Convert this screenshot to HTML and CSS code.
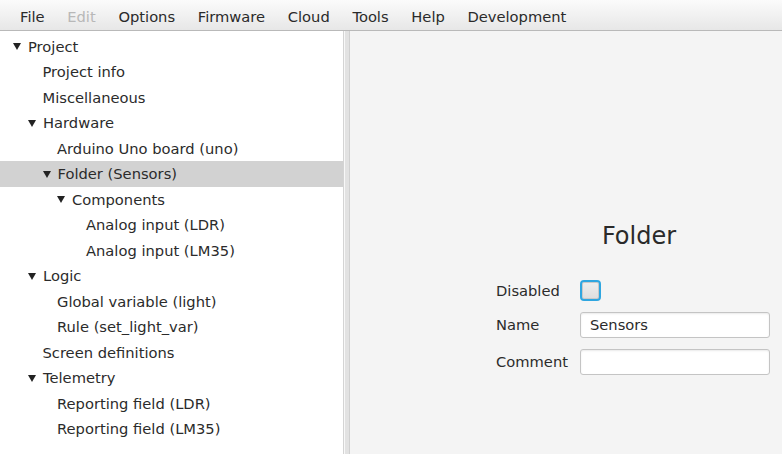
FILE: index.html
```html
<!DOCTYPE html>
<html>
<head>
<meta charset="utf-8">
<link rel="stylesheet" href="styles.css">
</head>
<body>
<div class="menubar">
  <span class="menu">File</span>
  <span class="menu disabled">Edit</span>
  <span class="menu">Options</span>
  <span class="menu">Firmware</span>
  <span class="menu">Cloud</span>
  <span class="menu">Tools</span>
  <span class="menu">Help</span>
  <span class="menu">Development</span>
</div>
<div class="main">
  <div class="tree">
    <div class="row l0"><span class="arrow"></span>Project</div>
    <div class="row l1">Project info</div>
    <div class="row l1">Miscellaneous</div>
    <div class="row l1"><span class="arrow"></span>Hardware</div>
    <div class="row l2">Arduino Uno board (uno)</div>
    <div class="row l2 selected"><span class="arrow"></span>Folder (Sensors)</div>
    <div class="row l3"><span class="arrow"></span>Components</div>
    <div class="row l4">Analog input (LDR)</div>
    <div class="row l4">Analog input (LM35)</div>
    <div class="row l1"><span class="arrow"></span>Logic</div>
    <div class="row l2">Global variable (light)</div>
    <div class="row l2">Rule (set_light_var)</div>
    <div class="row l1">Screen definitions</div>
    <div class="row l1"><span class="arrow"></span>Telemetry</div>
    <div class="row l2">Reporting field (LDR)</div>
    <div class="row l2">Reporting field (LM35)</div>
  </div>
  <div class="divider"></div>
  <div class="detail">
    <div class="form">
      <div class="title">Folder</div>
      <div class="field">
        <span class="label">Disabled</span>
        <span class="checkbox"></span>
      </div>
      <div class="field">
        <span class="label">Name</span>
        <span class="input">Sensors</span>
      </div>
      <div class="field">
        <span class="label">Comment</span>
        <span class="input"></span>
      </div>
    </div>
  </div>
</div>
</body>
</html>
```
FILE: styles.css
```css
* { box-sizing: border-box; }
html, body {
  margin: 0;
  padding: 0;
  width: 782px;
  height: 454px;
  overflow: hidden;
  font-family: "DejaVu Sans", sans-serif;
  font-size: 14.7px;
  color: #333333;
}
body {
  display: flex;
  flex-direction: column;
}
.menubar {
  height: 31px;
  display: flex;
  align-items: center;
  padding-left: 12px;
  padding-top: 2px;
  background: linear-gradient(#fbfbfb, #e7e7e7);
  border-bottom: 1px solid #b9b9b9;
}
.menu {
  padding: 0 8px;
  margin-right: 6.7px;
  color: #2a2a2a;
}
.menu.disabled { color: #b8b8b8; }
.main {
  flex: 1;
  display: flex;
  min-height: 0;
}
.tree {
  width: 344px;
  background: #ffffff;
  border-right: 1px solid #d4d4d4;
  padding-top: 2.5px;
}
.row {
  height: 25.5px;
  display: flex;
  align-items: center;
  white-space: nowrap;
  color: #2b2b2b;
}
.row.selected { background: #d2d2d2; }
.l0 { padding-left: 13px; }
.l1 { padding-left: 42.5px; }
.l2 { padding-left: 57px; }
.l3 { padding-left: 71.5px; }
.l4 { padding-left: 86px; }
.l1 .arrow, .l2 .arrow, .l3 .arrow { margin-left: -14.5px; }
.arrow {
  flex: none;
  width: 0;
  height: 0;
  border-left: 4px solid transparent;
  border-right: 4px solid transparent;
  border-top: 7px solid #222222;
  margin-right: 7px;
  margin-top: 1px;
}
.divider {
  width: 6px;
  background: #e2e2e2;
  border-left: 1px solid #f8f8f8;
  border-right: 1px solid #d0d0d0;
}
.detail {
  flex: 1;
  background: #f4f4f4;
  display: flex;
  justify-content: flex-end;
  padding-right: 12px;
  padding-top: 187px;
}
.form {
  width: 274px;
  display: flex;
  flex-direction: column;
}
.title {
  font-size: 24px;
  text-align: center;
  padding-left: 12px;
  color: #2a2a2a;
  height: 36px;
  line-height: 36px;
  margin-bottom: 25.5px;
}
.field {
  display: flex;
  align-items: center;
  margin-bottom: 11px;
}
.label {
  width: 84px;
  color: #2b2b2b;
}
.checkbox {
  width: 21px;
  height: 21px;
  border: 2px solid #2fa6e0;
  border-radius: 4px;
  background: linear-gradient(#eeeeee, #dedede);
  box-shadow: inset 0 0 0 1px #c9c9c9;
}
.input {
  width: 190px;
  height: 26px;
  background: #ffffff;
  border: 1px solid #c4c4c4;
  border-radius: 3px;
  box-shadow: inset 0 1px 2px #eaeaea;
  padding-left: 9px;
  display: flex;
  align-items: center;
  color: #2b2b2b;
}
```
